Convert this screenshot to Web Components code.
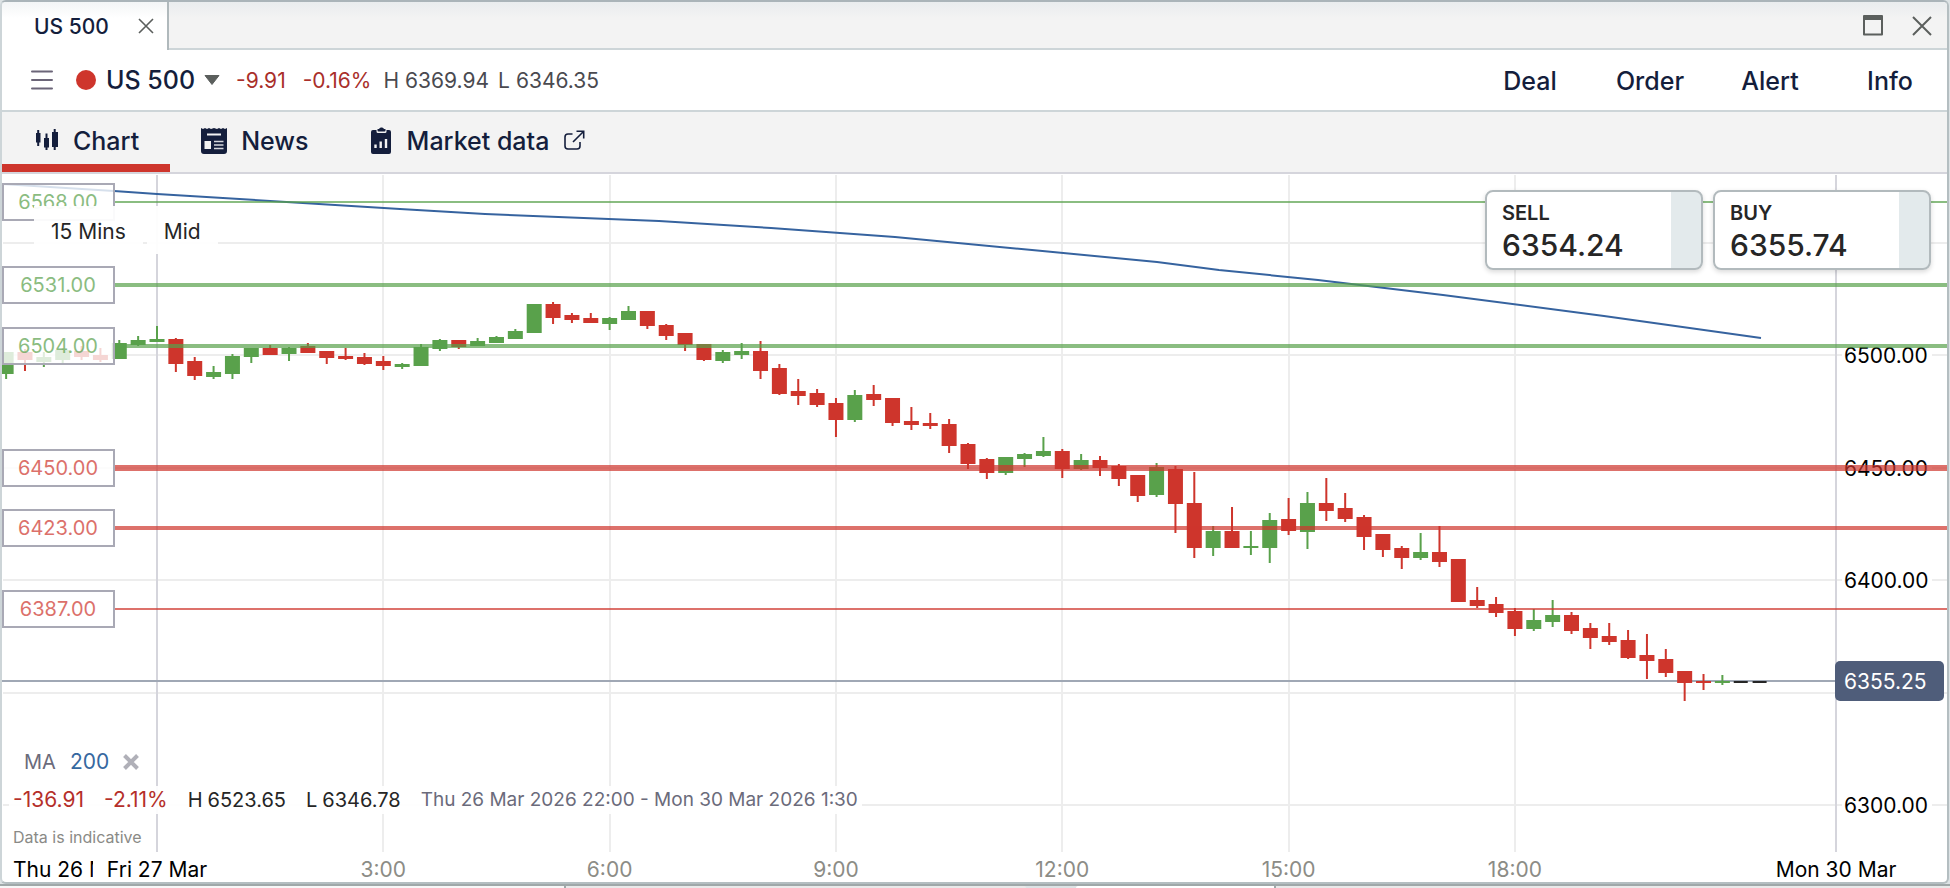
<!DOCTYPE html>
<html lang="en">
<head>
<meta charset="utf-8">
<title>US 500</title>
<style>
  body {
    background: #dde3e5;
    font-family: Inter, "Liberation Sans", sans-serif;
    height: 100vh;
    margin: 0;
  }
</style>
</head>
<body>

<deal-workspace>
  <deal-window>
    <window-tabs slot="tabs" label="US 500"></window-tabs>
    <market-header slot="header" market="US 500" change="-9.91" percent="-0.16%" high="6369.94" low="6346.35">
      <button>Deal</button>
      <button>Order</button>
      <button>Alert</button>
      <button>Info</button>
    </market-header>
    <section-nav slot="nav"></section-nav>
    <price-chart>
      <chart-options slot="options"></chart-options>
      <deal-ticket slot="tickets" side="SELL" price="6354.24"></deal-ticket>
      <deal-ticket slot="tickets" side="BUY" price="6355.74"></deal-ticket>
      <chart-summary slot="summary"></chart-summary>
    </price-chart>
  </deal-window>
</deal-workspace>

<script>
function attach (element, html) {
    const template = document.createElement('template');
    template.innerHTML = html;
    element.attachShadow({mode: 'open'});
    element.shadowRoot.appendChild(template.content.cloneNode(true));
}

customElements.define('deal-workspace', class extends HTMLElement {
    constructor () {
        super();
        attach(this, `
          <style>
            :host {
              display: flex;
              flex-direction: column;
              height: 100%;
            }

            #docked {
              border-top: 2px solid #9fa8a9;
              display: flex;
              gap: 50px;
              height: 2px;
            }

            .dock {
              background: linear-gradient(90deg, #f7f7f7 564px, #9fa8a9 564px, #9fa8a9 566px, #e9e9e9 566px);
              border-radius: 0 4px 0 0;
              flex: 1026;
            }

            .dock + .dock {
              background: linear-gradient(90deg, #fff 198px, #9fa8a9 198px, #9fa8a9 200px, #e9e9e9 200px);
              border-radius: 4px 0 0 0;
              flex: 874;
            }
          </style>
          <slot></slot>
          <div id="docked"><div class="dock"></div><div class="dock"></div></div>
        `);
    }
});

customElements.define('deal-window', class extends HTMLElement {
    constructor () {
        super();
        attach(this, `
          <style>
            :host {
              background: #fff;
              border: 2px solid #b4bec1;
              border-left-color: #cdd5d8;
              border-radius: 6px;
              border-top-color: #aab4b9;
              display: flex;
              flex: 1;
              flex-direction: column;
              margin-right: 1px;
              min-height: 0;
              overflow: hidden;
            }
          </style>
          <slot name="tabs"></slot>
          <slot name="header"></slot>
          <slot name="nav"></slot>
          <slot></slot>
        `);
    }
});

customElements.define('window-tabs', class extends HTMLElement {
    constructor () {
        super();
        attach(this, `
          <style>
            :host {
              background: linear-gradient(#e9ecee, #f3f3f3 16px);
              display: flex;
              height: 48px;
            }

            button {
              background: none;
              border: none;
              display: block;
              padding: 0;
            }

            svg {
              display: block;
            }

            #tab {
              align-items: center;
              background: linear-gradient(#f3f5f6, #fff 16px);
              border-right: 2px solid #b0b9bc;
              color: #141e3c;
              display: flex;
              font-size: 21px;
              font-weight: 500;
              gap: 29px;
              padding: 0 13px 0 32px;
            }

            #controls {
              align-items: center;
              border-bottom: 2px solid #cdd5d8;
              display: flex;
              flex: 1;
              gap: 28px;
              justify-content: flex-end;
              padding: 2px 15px 0 0;
            }
          </style>
          <div id="tab">
            <span></span>
            <button aria-label="Close tab">
              <svg width="16" height="16" fill="none" stroke="#5b5f5d" stroke-width="1.6"><path d="M1 1l14 14M15 1L1 15"/></svg>
            </button>
          </div>
          <div id="controls">
            <button aria-label="Maximise">
              <svg width="22" height="22"><path d="M2 1h18v18.500H2z" fill="none" stroke="#5b5f5d" stroke-width="2" stroke-linejoin="round"/><path d="M1 1h20v4H1z" fill="#5b5f5d"/></svg>
            </button>
            <button aria-label="Close window">
              <svg width="20" height="20" fill="none" stroke="#5b5f5d" stroke-width="2"><path d="M1 1l18 18M19 1L1 19"/></svg>
            </button>
          </div>
        `);
    }

    connectedCallback () {
        this.shadowRoot.querySelector('span').textContent = this.getAttribute('label');
    }
});

customElements.define('market-header', class extends HTMLElement {
    constructor () {
        super();
        attach(this, `
          <style>
            :host {
              align-items: center;
              border-bottom: 2px solid #cdd5d8;
              color: #4a4a50;
              display: flex;
              font-size: 21px;
              height: 60px;
              justify-content: space-between;
            }

            svg {
              display: block;
            }

            #market {
              align-items: center;
              display: flex;
              padding-left: 29px;
            }

            #menu, #name {
              background: none;
              border: none;
              color: #141e3c;
              font: inherit;
              padding: 0;
            }

            #status {
              background: #ce352c;
              border-radius: 50%;
              height: 20px;
              margin: 0 10px 0 23px;
              width: 20px;
            }

            #name {
              align-items: center;
              display: flex;
              font-size: 25px;
              font-weight: 500;
              gap: 9px;
              margin-right: 16px;
            }

            .change {
              color: #a92f2a;
              margin-right: 17px;
            }

            #percent {
              margin-right: 12px;
            }

            .range {
              display: flex;
              gap: 6px;
              margin-right: 9px;
            }

            #actions {
              display: flex;
              padding-top: 2px;
            }

            ::slotted(button) {
              background: none;
              border: none;
              box-sizing: border-box;
              color: #141e3c;
              font: 500 25px/32px Inter, "Liberation Sans", sans-serif;
              padding: 0 0 0 6px;
              text-align: center;
              width: 120px;
            }
          </style>
          <div id="market">
            <button id="menu" aria-label="Menu">
              <svg width="22" height="20" stroke="#6b6578" stroke-width="2" stroke-linecap="round"><path d="M1 1.500h20M1 10h20M1 18.500h20"/></svg>
            </button>
            <span id="status"></span>
            <button id="name"><span></span><svg width="16" height="10" fill="#5b5f5d"><path d="M1 0.500h14L8 9.500z" stroke="#5b5f5d" stroke-linejoin="round"/></svg></button>
            <span class="change" id="change"></span>
            <span class="change" id="percent"></span>
            <span class="range"><span>H</span><span id="high"></span></span>
            <span class="range"><span>L</span><span id="low"></span></span>
          </div>
          <div id="actions"><slot></slot></div>
        `);
    }

    connectedCallback () {
        this.shadowRoot.querySelector('#name span').textContent = this.getAttribute('market');
        ['change', 'percent', 'high', 'low'].forEach(id => {
            this.shadowRoot.getElementById(id).textContent = this.getAttribute(id);
        });
    }
});

customElements.define('section-nav', class extends HTMLElement {
    constructor () {
        super();
        attach(this, `
          <style>
            :host {
              background: #f3f3f3;
              border-bottom: 2px solid #d5d5dc;
              display: block;
            }

            nav {
              display: flex;
            }

            a {
              align-items: center;
              border-bottom: 8px solid transparent;
              box-sizing: border-box;
              color: #141e3c;
              display: flex;
              font-size: 25px;
              font-weight: 500;
              gap: 14px;
              height: 60px;
              padding: 6px 31px 0 31px;
              text-decoration: none;
            }

            a[aria-current] {
              border-bottom-color: #ce352c;
            }

            svg {
              display: block;
            }
          </style>
          <nav>
            <a href="#chart" aria-current="page">
              <svg width="26" height="24" fill="#141e3c"><path d="M3 4h1.200V1h2v3h1.300v9.500H6.200V17h-2v-3.500H3zM11 9h1.500V4.500h2V9H16v9.500h-1.500V21h-2v-2.500H11zM19 3h1.700V0h2v3H25v15h-2.300v3h-2v-3H19z"/></svg>
              Chart
            </a>
            <a href="#news">
              <svg width="26" height="28" fill="#141e3c"><path d="M0 1l2 1 2-1 2 1 2-1 2 1 3-1 3 1 2-1 2 1 2-1 2 1 2-1v23q0 3-3 3H3q-3 0-3-3z"/><path d="M6 7.500h14" stroke="#f3f3f3" stroke-width="2"/><path d="M3.500 14h6.500v8H3.500z" fill="#f3f3f3"/><path d="M13 14.500h9.500M13 18h9.500M13 21.500h9.500" stroke="#d5d7dc" stroke-width="1.400"/></svg>
              News
            </a>
            <a href="#market-data">
              <svg width="22" height="28" fill="#141e3c"><path d="M3 3h2.500v1.500q0 1.500 1.500 1.500h7q1.500 0 1.500-1.500V3H18q2 0 2 2v20q0 2-2 2H2q-2 0-2-2V5q0-2 2-2z"/><path d="M6.500 2H8q.5-1.500 2-1.500h1q1.500 0 2 1.500h1.500v1.500q0 1-1 1h-6q-1 0-1-1z"/><path d="M4.500 17.500v3.500M9.700 14.500V21M15 12v9" stroke="#f3f3f3" stroke-width="2.400"/></svg>
              Market data
              <svg width="22" height="22" fill="none" stroke="#141e3c" stroke-width="1.600"><path d="M9.500 4H5Q2 4 2 7v9q0 3 3 3h9q3 0 3-3v-4M10 12L20.500 1.500M13.500 1.300h7.200v7.200"/></svg>
            </a>
          </nav>
        `);
    }
});

customElements.define('deal-ticket', class extends HTMLElement {
    constructor () {
        super();
        attach(this, `
          <style>
            :host {
              display: block;
            }

            button {
              background: linear-gradient(90deg, #fff 184px, #e3eaec 184px);
              border: 2px solid #b2babd;
              border-radius: 8px;
              box-shadow: 0 2px 5px rgba(0, 0, 0, 0.15);
              color: #262626;
              display: block;
              font: 600 20px/24px Inter, "Liberation Sans", sans-serif;
              height: 80px;
              padding: 6px 15px 0;
              text-align: left;
              width: 218px;
            }

            #price {
              display: block;
              font-size: 30px;
              font-weight: 500;
              line-height: 40px;
            }
          </style>
          <button><span id="side"></span><span id="price"></span></button>
        `);
    }

    connectedCallback () {
        this.shadowRoot.getElementById('side').textContent = this.getAttribute('side');
        this.shadowRoot.getElementById('price').textContent = this.getAttribute('price');
    }
});

customElements.define('chart-options', class extends HTMLElement {
    constructor () {
        super();
        attach(this, `
          <style>
            :host {
              display: flex;
              gap: 4px;
            }

            button {
              background: rgba(255, 255, 255, 0.94);
              border: none;
              color: #262626;
              font: 21px/24px Inter, "Liberation Sans", sans-serif;
              padding: 14px 17px 10px;
            }
          </style>
          <button>15 Mins</button>
          <button>Mid</button>
        `);
    }
});

customElements.define('chart-summary', class extends HTMLElement {
    constructor () {
        super();
        attach(this, `
          <style>
            :host {
              color: #6b6b7b;
              display: block;
              font-size: 20px;
              line-height: 28px;
            }

            #indicator {
              align-items: center;
              display: flex;
              gap: 14px;
              padding: 0 0 10px 15px;
            }

            #period {
              color: #36689f;
              font-size: 21px;
            }

            button {
              background: none;
              border: none;
              padding: 0;
            }

            svg {
              display: block;
            }

            #totals {
              background: rgba(255, 255, 255, 0.92);
              display: flex;
              gap: 20px;
              padding: 0 4px;
              width: max-content;
            }

            .loss {
              color: #b52f2a;
              font-size: 21px;
            }

            .range {
              color: #262626;
              display: flex;
              gap: 5px;
            }

            #dates {
              font-size: 19px;
            }

            p {
              color: #8a8a86;
              font-size: 16px;
              line-height: 20px;
              margin: 13px 0 0 4px;
            }
          </style>
          <div id="indicator">
            <span>MA</span>
            <span id="period">200</span>
            <button aria-label="Remove moving average">
              <svg width="16" height="16" stroke="#b0b0b8" stroke-width="4"><path d="M1.500 1.500l13 13M14.500 1.500l-13 13"/></svg>
            </button>
          </div>
          <div id="totals">
            <span class="loss">-136.91</span>
            <span class="loss">-2.11%</span>
            <span class="range"><span>H</span><span>6523.65</span></span>
            <span class="range"><span>L</span><span>6346.78</span></span>
            <span id="dates">Thu 26 Mar 2026 22:00 - Mon 30 Mar 2026 1:30</span>
          </div>
          <p>Data is indicative</p>
        `);
    }
});

// size of the drawing that the series below are given in
const WIDTH = 1945;
const HEIGHT = 708;
const AXIS_X = 1834;
const MIDNIGHT_X = 155;
const STEP = 18.86;
const FIRST = -8;

// one entry per 15 minutes: direction, wick top, body top, body bottom, wick bottom
const candles = [
    ['u', 178, 178, 200, 205], ['d', 175, 178, 186, 197], ['u', 178, 183, 188, 193], ['u', 174, 176, 186, 189],
    ['d', 172, 177, 183, 186], ['d', 174, 181, 186, 188], ['u', 166, 169, 185, 185], ['u', 162, 166, 171, 172],
    ['u', 152, 165, 168, 168], ['d', 164, 165, 190, 198], ['d', 183, 187, 202, 206], ['u', 192, 198, 203, 205],
    ['u', 180, 182, 200, 205], ['u', 174, 174, 183, 189], ['d', 171, 174, 181, 181], ['u', 173, 174, 180, 187],
    ['d', 169, 172, 179, 179], ['d', 177, 177, 184, 190], ['d', 174, 182, 185, 186], ['d', 179, 183, 190, 191],
    ['d', 182, 187, 192, 196], ['u', 189, 190, 193, 195], ['u', 170, 173, 192, 192], ['u', 165, 166, 175, 177],
    ['d', 166, 166, 173, 175], ['u', 164, 167, 172, 172], ['u', 162, 163, 169, 169], ['u', 155, 157, 165, 165],
    ['u', 130, 130, 159, 159], ['d', 128, 130, 144, 150], ['d', 139, 141, 146, 149], ['d', 139, 144, 149, 149],
    ['u', 143, 144, 150, 156], ['u', 132, 137, 146, 146], ['d', 137, 137, 152, 155], ['d', 150, 151, 162, 166],
    ['d', 159, 159, 171, 177], ['d', 170, 170, 186, 187], ['u', 176, 178, 187, 189], ['u', 169, 177, 181, 185],
    ['d', 167, 177, 197, 205], ['d', 190, 194, 220, 221], ['d', 205, 217, 222, 231], ['d', 215, 219, 231, 233],
    ['d', 224, 229, 246, 263], ['u', 216, 221, 246, 248], ['d', 211, 220, 226, 232], ['d', 224, 224, 249, 252],
    ['d', 233, 247, 251, 256], ['d', 239, 249, 252, 255], ['d', 245, 250, 272, 279], ['d', 269, 270, 290, 295],
    ['d', 284, 285, 299, 305], ['u', 283, 283, 299, 301], ['u', 279, 280, 285, 293], ['u', 263, 277, 282, 283],
    ['d', 275, 277, 295, 304], ['u', 280, 286, 295, 296], ['d', 282, 286, 294, 302], ['d', 290, 292, 305, 312],
    ['d', 301, 301, 322, 328], ['u', 289, 293, 321, 323], ['d', 292, 295, 330, 359], ['d', 298, 329, 374, 384],
    ['u', 352, 357, 374, 382], ['d', 333, 357, 374, 374], ['u', 357, 372, 373, 381], ['u', 339, 346, 374, 389],
    ['d', 324, 345, 357, 361], ['u', 318, 329, 358, 375], ['d', 304, 329, 337, 347], ['d', 319, 334, 345, 348],
    ['d', 341, 343, 363, 376], ['d', 360, 360, 376, 383], ['d', 372, 374, 384, 395], ['u', 359, 378, 384, 386],
    ['d', 352, 378, 388, 393], ['d', 385, 385, 428, 428], ['d', 413, 426, 432, 434], ['d', 423, 430, 439, 443],
    ['d', 434, 437, 455, 462], ['u', 435, 446, 455, 457], ['u', 426, 441, 448, 453], ['d', 438, 441, 457, 460],
    ['d', 449, 454, 464, 475], ['d', 449, 462, 468, 471], ['d', 456, 466, 484, 485], ['d', 460, 481, 487, 505],
    ['d', 475, 485, 499, 503], ['d', 497, 497, 509, 527], ['d', 500, 507, 509, 516], ['u', 501, 507, 509, 511],
    ['n', 507, 507, 508, 508], ['n', 507, 507, 508, 508]
];

const average = [
    [0, 10], [112, 17], [155, 20], [398, 35], [483, 40], [657, 47], [769, 54], [893, 63], [1030, 76],
    [1155, 88], [1217, 96], [1316, 106], [1441, 121], [1602, 142], [1759, 164]
];

const levels = [
    {price: 6568, side: 'support', weight: 2},
    {price: 6531, side: 'support', weight: 4},
    {price: 6504, side: 'support', weight: 4},
    {price: 6450, side: 'resistance', weight: 6},
    {price: 6423, side: 'resistance', weight: 4},
    {price: 6387, side: 'resistance', weight: 2}
];

const last = 6355.25;

customElements.define('price-chart', class extends HTMLElement {
    constructor () {
        super();
        attach(this, `
          <style>
            :host {
              display: block;
              flex: 1;
              min-height: 0;
              overflow: hidden;
              position: relative;
            }

            #plot {
              display: block;
              font-size: 21px;
              height: 100%;
              width: 100%;
            }

            #options {
              left: 32px;
              position: absolute;
              top: 32px;
            }

            #tickets {
              display: flex;
              gap: 10px;
              position: absolute;
              right: 16px;
              top: 16px;
            }

            #summary {
              bottom: 35px;
              left: 7px;
              position: absolute;
            }

            /* cut short where the next day's label begins */
            #previous {
              bottom: 0;
              font-size: 21px;
              left: 11px;
              line-height: 25px;
              overflow: hidden;
              position: absolute;
              white-space: nowrap;
              width: 80px;
            }

            .grid { fill: #ededed; }
            .day { fill: #d5d5dc; }
            .u { fill: #59a14b; }
            .d { fill: #ce352c; }
            .n { fill: #262626; }
            .average { fill: none; stroke: #36639f; stroke-width: 2; }
            .support { fill: #59a14b; opacity: 0.7; }
            .resistance { fill: #ce352c; opacity: 0.7; }
            .box { fill: #fff; fill-opacity: 0.8; stroke: #a9a9b5; stroke-width: 2; }
            .level { font-size: 20px; }
            .halo { fill: #fff; }
            .time { fill: #8c8c86; }
            .current { fill: #a0a8b5; }
            .badge { fill: #4f5d7a; }
            .badge-text { fill: #fff; }
          </style>
          <svg id="plot" role="img" aria-label="US 500 15 minute price chart"></svg>
          <div id="options"><slot name="options"></slot></div>
          <div id="tickets"><slot name="tickets"></slot></div>
          <div id="summary"><slot name="summary"></slot></div>
          <div id="previous">Thu 26 Mar</div>
        `);
        this._plot = this.shadowRoot.getElementById('plot');
        this._observer = new ResizeObserver(() => this.draw());
    }

    connectedCallback () {
        this._observer.observe(this);
        this.draw();
    }

    disconnectedCallback () {
        this._observer.disconnect();
    }

    draw () {
        const width = this.clientWidth;
        const height = this.clientHeight;
        const axis = width - (WIDTH - AXIS_X);
        const sx = axis / AXIS_X;
        const sy = height / HEIGHT;
        const time = i => (MIDNIGHT_X + i * STEP) * sx;
        const price = p => Math.round((631 + (6300 - p) * 2.25) * sy);
        const bottom = height - 30;
        const rect = (x, y, w, h, name) =>
            `<rect x="${x}" y="${y}" width="${w}" height="${Math.max(h, 0)}" class="${name}"/>`;
        const text = (x, y, content, name, anchor = 'start') =>
            `<text x="${x}" y="${y}" class="${name}" text-anchor="${anchor}">${content}</text>`;
        let out = '';

        [6550, 6500, 6450, 6400, 6350, 6300].forEach(p => {
            out += rect(1, price(p) - 1, width - 1, 2, 'grid');
        });
        [12, 24, 36, 48, 60, 72].forEach(i => {
            out += rect(Math.round(time(i)) - 1, 1, 2, bottom - 1, 'grid');
        });
        [time(0), axis].forEach(x => {
            out += rect(Math.round(x) - 1, 1, 2, bottom - 1, 'day');
        });
        out += rect(0, price(last) - 1, axis, 2, 'current');

        [6500, 6450, 6400, 6300].forEach(p => {
            out += rect(axis + 6, price(p) - 10, 90, 20, 'halo');
            out += text(axis + 8, price(p) + 8, p.toFixed(2), 'axis');
        });

        candles.forEach(([name, high, top, base, low], n) => {
            const x = time(n + FIRST);
            out += rect(x - 1, high * sy, 2, (low - high) * sy, name);
            out += rect(x - 7.5, top * sy, name === 'n' ? 14 : 15, Math.max(base - top, 2) * sy, name);
        });

        out += `<polyline class="average" points="${average.map(([x, y]) => x * sx + ',' + y * sy).join(' ')}"/>`;

        levels.forEach(level => {
            const y = price(level.price);
            out += rect(112, y - level.weight / 2, width - 112, level.weight, level.side);
            out += rect(1, y - 18, 111, 36, 'box');
            out += text(56, y + 7, level.price.toFixed(2), 'level ' + level.side, 'middle');
        });

        out += rect(axis - 1, price(last) - 20, 109, 40, 'badge').replace('<rect', '<rect rx="5"');
        out += text(axis + 8, price(last) + 8, last.toFixed(2), 'badge-text');

        const labels = height - 5;
        out += text(time(0), labels, 'Fri 27 Mar', 'axis', 'middle');
        ['3:00', '6:00', '9:00', '12:00', '15:00', '18:00'].forEach((label, n) => {
            out += text(time((n + 1) * 12), labels, label, 'time', 'middle');
        });
        out += text(axis, labels, 'Mon 30 Mar', 'axis', 'middle');

        this._plot.innerHTML = out;
    }
});
</script>
</body>
</html>
